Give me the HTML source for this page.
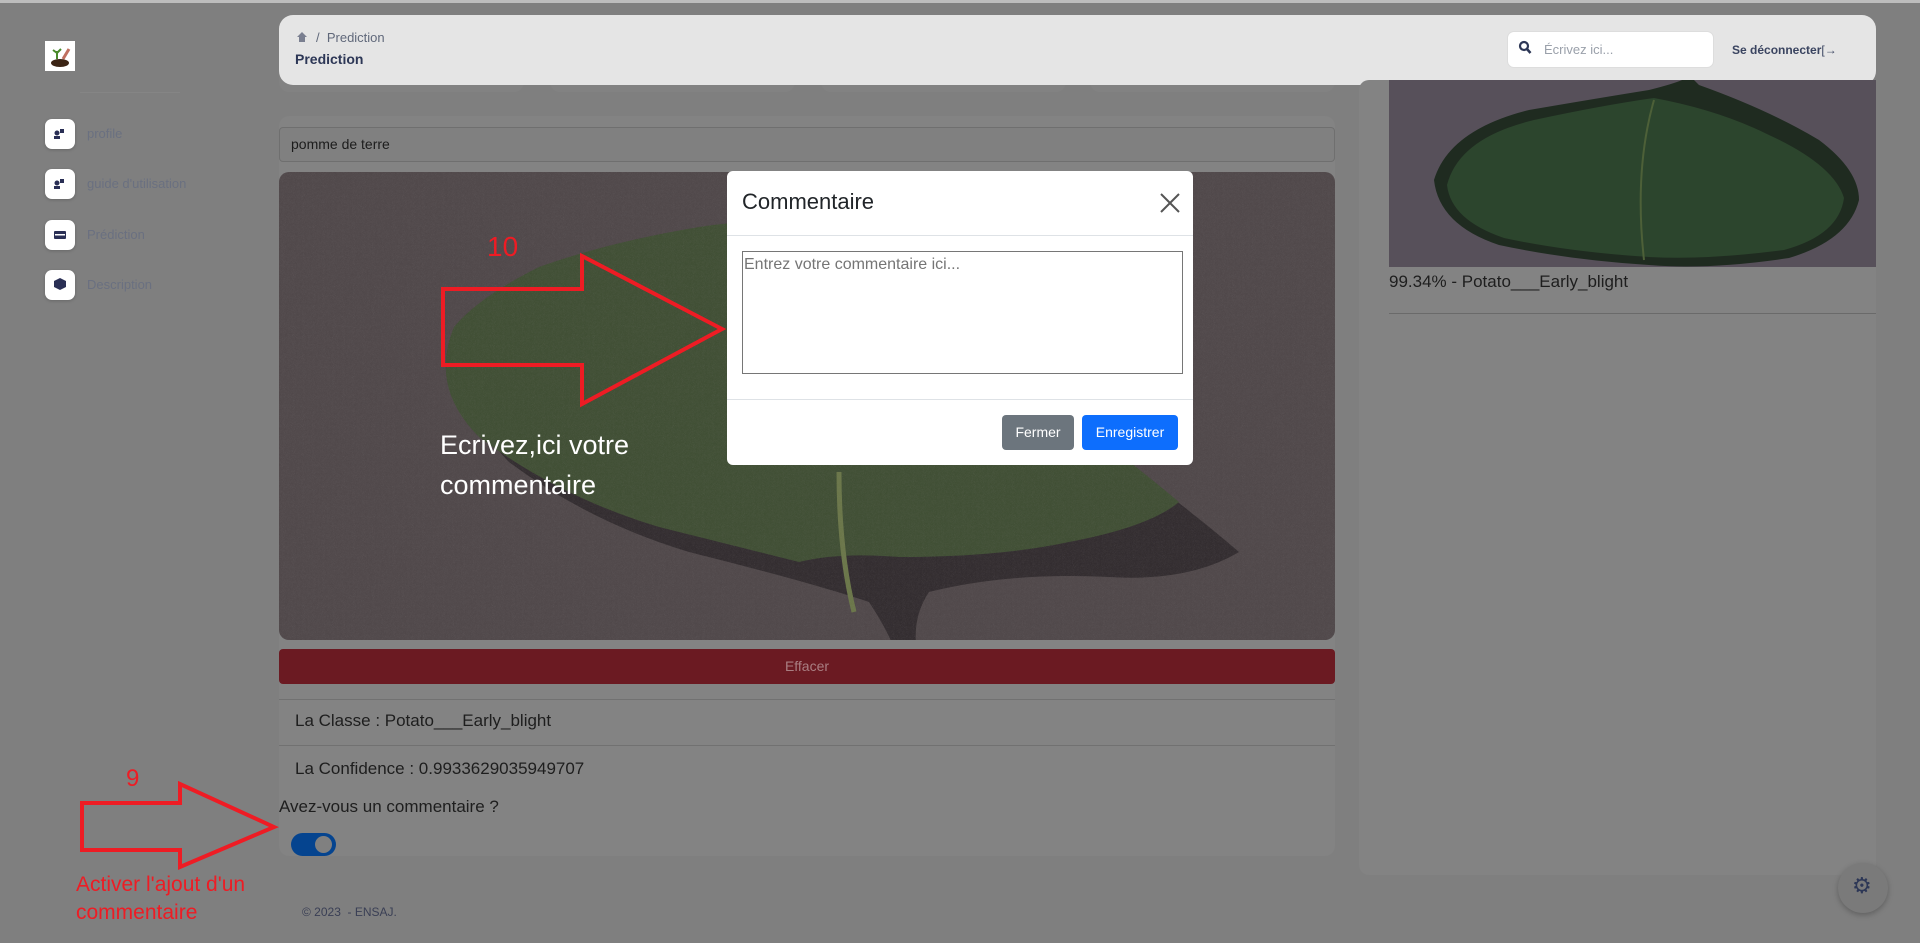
<!DOCTYPE html>
<html><head><meta charset="utf-8"><style>
*{box-sizing:border-box;margin:0;padding:0}
body{width:1920px;height:943px;overflow:hidden;background:#7f7f7f;font-family:"Liberation Sans",sans-serif;position:relative}
.abs{position:absolute}
.side-ic{position:absolute;left:45px;width:30px;height:30px;background:#fff;border-radius:7px;box-shadow:0 1px 3px rgba(0,0,0,.2)}
.side-tx{position:absolute;left:87px;font-size:13px;color:#6a7080}
.card{background:#838383;border-radius:10px}
</style></head><body>
<div class="abs" style="left:0;top:0;width:1920px;height:3px;background:#bdbdbd"></div>
<!-- sidebar -->
<div class="abs" style="left:45px;top:41px;width:30px;height:30px;background:#fff">
<svg width="30" height="30"><ellipse cx="15" cy="22" rx="9" ry="4" fill="#3b2414"/><path d="M12 18 v-8 M12 12 l-4 -3 M12 12 l4-4" stroke="#4a8a2a" stroke-width="2" fill="none"/><path d="M18 18 l6 -10" stroke="#c07060" stroke-width="3"/></svg></div>
<div class="abs" style="left:80px;top:92px;width:100px;height:1px;background:#858585"></div>
<div class="side-ic" style="top:119px"></div><div class="side-tx" style="top:126px">profile</div>
<div class="side-ic" style="top:169px"></div><div class="side-tx" style="top:176px">guide d'utilisation</div>
<div class="side-ic" style="top:220px"></div><div class="side-tx" style="top:227px">Prédiction</div>
<div class="side-ic" style="top:270px"></div><div class="side-tx" style="top:277px">Description</div>
<svg class="abs" style="left:45px;top:119px" width="30" height="190"><g fill="#2a2f55"><circle cx="12" cy="14" r="2.5"/><rect x="9" y="17" width="6" height="3"/><rect x="15" y="10" width="4" height="4"/><circle cx="12" cy="64" r="2.5"/><rect x="9" y="67" width="6" height="3"/><rect x="15" y="60" width="4" height="4"/><rect x="9" y="112" width="12" height="8" rx="1"/><path d="M9 162 l6 -3 6 3 v6 l-6 3 -6 -3z"/></g><rect x="10" y="115" width="10" height="1.5" fill="#fff"/></svg>
<!-- stat cards behind header -->
<div class="abs card" style="left:279px;top:60px;width:245px;height:32px;background:#828282"></div>
<div class="abs card" style="left:550px;top:60px;width:245px;height:32px;background:#828282"></div>
<div class="abs card" style="left:821px;top:60px;width:245px;height:32px;background:#828282"></div>
<div class="abs card" style="left:1090px;top:60px;width:245px;height:32px;background:#828282"></div>
<!-- header -->
<div class="abs" style="left:279px;top:15px;width:1597px;height:70px;background:#e5e5e5;border-radius:14px"></div>
<svg class="abs" style="left:296px;top:31px" width="12" height="12"><path d="M6 1 L11 6 H9 V11 H3 V6 H1z" fill="#7a7f90"/></svg>
<div class="abs" style="left:316px;top:30px;font-size:13px;color:#60687a">/ &nbsp;Prediction</div>
<div class="abs" style="left:295px;top:51px;font-size:14px;font-weight:bold;color:#2d3756">Prediction</div>
<div class="abs" style="left:1507px;top:31px;width:207px;height:37px;background:#fff;border-radius:7px;border:1px solid #ddd"></div>
<svg class="abs" style="left:1518px;top:40px" width="14" height="16"><circle cx="6" cy="6" r="4" stroke="#2d3756" stroke-width="2.2" fill="none"/><path d="M9 9 l3.5 4" stroke="#2d3756" stroke-width="2.5"/></svg>
<div class="abs" style="left:1544px;top:42px;font-size:13px;color:#9aa0aa">Écrivez ici...</div>
<div class="abs" style="left:1732px;top:43px;font-size:12px;font-weight:bold;color:#3a4460">Se déconnecter<span style="font-weight:normal">[→</span></div>
<!-- main card -->
<div class="abs card" style="left:279px;top:116px;width:1056px;height:740px"></div>
<div class="abs" style="left:279px;top:127px;width:1056px;height:35px;border:1px solid #6f6f6f;border-radius:4px;background:#808080"></div>
<div class="abs" style="left:291px;top:136px;font-size:14px;color:#1c1c1c">pomme de terre</div>
<svg class="abs" style="left:279px;top:172px;border-radius:10px" width="1056" height="468">
<defs><filter id="n"><feTurbulence baseFrequency="0.9" numOctaves="2"/><feColorMatrix values="0 0 0 0 0.3 0 0 0 0 0.28 0 0 0 0 0.29 0 0 0 0.2 0"/></filter></defs>
<rect width="1056" height="468" fill="#4f4749"/>
<path d="M930 360 Q860 300 760 230 Q700 180 680 130 Q640 80 560 60 Q480 50 420 60 Q330 75 260 100 Q200 130 175 160 Q150 220 200 270 Q280 330 380 360 Q500 390 560 410 Q580 440 590 468 H610 Q600 430 620 400 Q700 380 800 385 Q880 390 930 360z" fill="#2b2729" opacity=".85" transform="translate(30,20)"/>
<path d="M900 330 Q840 280 760 220 Q700 170 680 120 Q640 70 560 55 Q480 45 420 55 Q330 70 260 95 Q200 125 175 155 Q150 215 200 265 Q280 325 380 355 Q480 380 520 390 Q560 380 620 385 Q720 385 790 370 Q870 355 900 330z" fill="#3f4e33"/>
<path d="M560 300 Q560 380 575 440" stroke="#6a7648" stroke-width="5" fill="none"/>
<rect width="1056" height="468" filter="url(#n)"/>
</svg>
<div class="abs" style="left:279px;top:649px;width:1056px;height:35px;background:#6b1a22;border-radius:4px;color:#a97e82;font-size:14px;text-align:center;line-height:35px">Effacer</div>
<div class="abs" style="left:279px;top:699px;width:1056px;height:1px;background:#717171"></div>
<div class="abs" style="left:279px;top:745px;width:1056px;height:1px;background:#717171"></div>
<div class="abs" style="left:295px;top:711px;font-size:17px;color:#1e1e1e">La Classe : Potato___Early_blight</div>
<div class="abs" style="left:295px;top:759px;font-size:17px;color:#1e1e1e">La Confidence : 0.9933629035949707</div>
<div class="abs" style="left:279px;top:797px;font-size:17px;color:#1e1e1e">Avez-vous un commentaire ?</div>
<div class="abs" style="left:291px;top:833px;width:45px;height:23px;border-radius:12px;background:#05448f"></div>
<div class="abs" style="left:315px;top:836px;width:17px;height:17px;border-radius:50%;background:#808080"></div>
<!-- right card -->
<div class="abs card" style="left:1359px;top:80px;width:517px;height:795px"></div>
<svg class="abs" style="left:1389px;top:80px" width="487" height="187">
<rect width="487" height="187" fill="#57505a"/>
<path d="M45 100 Q60 50 140 30 Q210 18 260 10 Q300 0 300 -5 L310 5 Q380 30 430 60 Q470 90 470 120 Q460 160 400 178 Q320 190 260 185 Q180 180 110 165 Q50 145 45 100z" fill="#1f2b20"/>
<path d="M58 105 Q70 58 145 40 Q215 25 265 18 Q330 30 380 55 Q445 85 455 118 Q450 155 395 170 Q320 180 260 177 Q180 172 115 158 Q62 140 58 105z" fill="#2c452d"/>
<path d="M265 20 Q245 90 255 180" stroke="#4d6038" stroke-width="2" fill="none"/>
</svg>
<div class="abs" style="left:1389px;top:272px;font-size:17px;color:#1e1e1e">99.34% - Potato___Early_blight</div>
<div class="abs" style="left:1389px;top:313px;width:487px;height:1px;background:#6a6a6a"></div>
<div class="abs" style="left:302px;top:905px;font-size:12px;color:#3a3f55">© 2023 &nbsp;- ENSAJ.</div>
<div class="abs" style="left:1838px;top:863px;width:50px;height:50px;border-radius:50%;background:#7a7a7a;box-shadow:0 2px 6px rgba(0,0,0,.25)"></div>
<div class="abs" style="left:1852px;top:873px;font-size:22px;color:#2d3756">⚙</div>
<!-- modal -->
<div class="abs" style="left:727px;top:171px;width:466px;height:294px;background:#fff;border-radius:6px"></div>
<div class="abs" style="left:742px;top:189px;font-size:22px;color:#212529">Commentaire</div>
<svg class="abs" style="left:1159px;top:192px" width="22" height="22"><path d="M2 2 L20 20 M20 2 L2 20" stroke="#555" stroke-width="2"/></svg>
<div class="abs" style="left:727px;top:235px;width:466px;height:1px;background:#dee2e6"></div>
<div class="abs" style="left:742px;top:251px;width:441px;height:123px;border:1px solid #767676"></div>
<div class="abs" style="left:744px;top:256px;font-size:16px;color:#757575">Entrez votre commentaire ici...</div>
<div class="abs" style="left:727px;top:399px;width:466px;height:1px;background:#dee2e6"></div>
<div class="abs" style="left:1002px;top:415px;width:72px;height:35px;background:#6c757d;border-radius:4px;color:#fff;font-size:14px;text-align:center;line-height:35px">Fermer</div>
<div class="abs" style="left:1082px;top:415px;width:96px;height:35px;background:#0d6efd;border-radius:4px;color:#fff;font-size:14px;text-align:center;line-height:35px">Enregistrer</div>
<!-- annotations -->
<svg class="abs" style="left:0;top:0" width="1920" height="943">
<path d="M443 289 H582 V256 L722 329 L582 404 V365 H443z" fill="none" stroke="#ee1c24" stroke-width="4"/>
<path d="M82 803 H180 V784 L274 827 L180 867 V850 H82z" fill="none" stroke="#ee1c24" stroke-width="4"/>
</svg>
<div class="abs" style="left:487px;top:231px;font-size:28px;color:#ee1c24">10</div>
<div class="abs" style="left:126px;top:765px;font-size:24px;color:#ee1c24">9</div>
<div class="abs" style="left:440px;top:425px;font-size:27px;line-height:40px;color:#fff">Ecrivez,ici votre<br>commentaire</div>
<div class="abs" style="left:76px;top:871px;font-size:21px;line-height:28px;color:#ee1c24">Activer l'ajout d'un<br>commentaire</div>
</body></html>
